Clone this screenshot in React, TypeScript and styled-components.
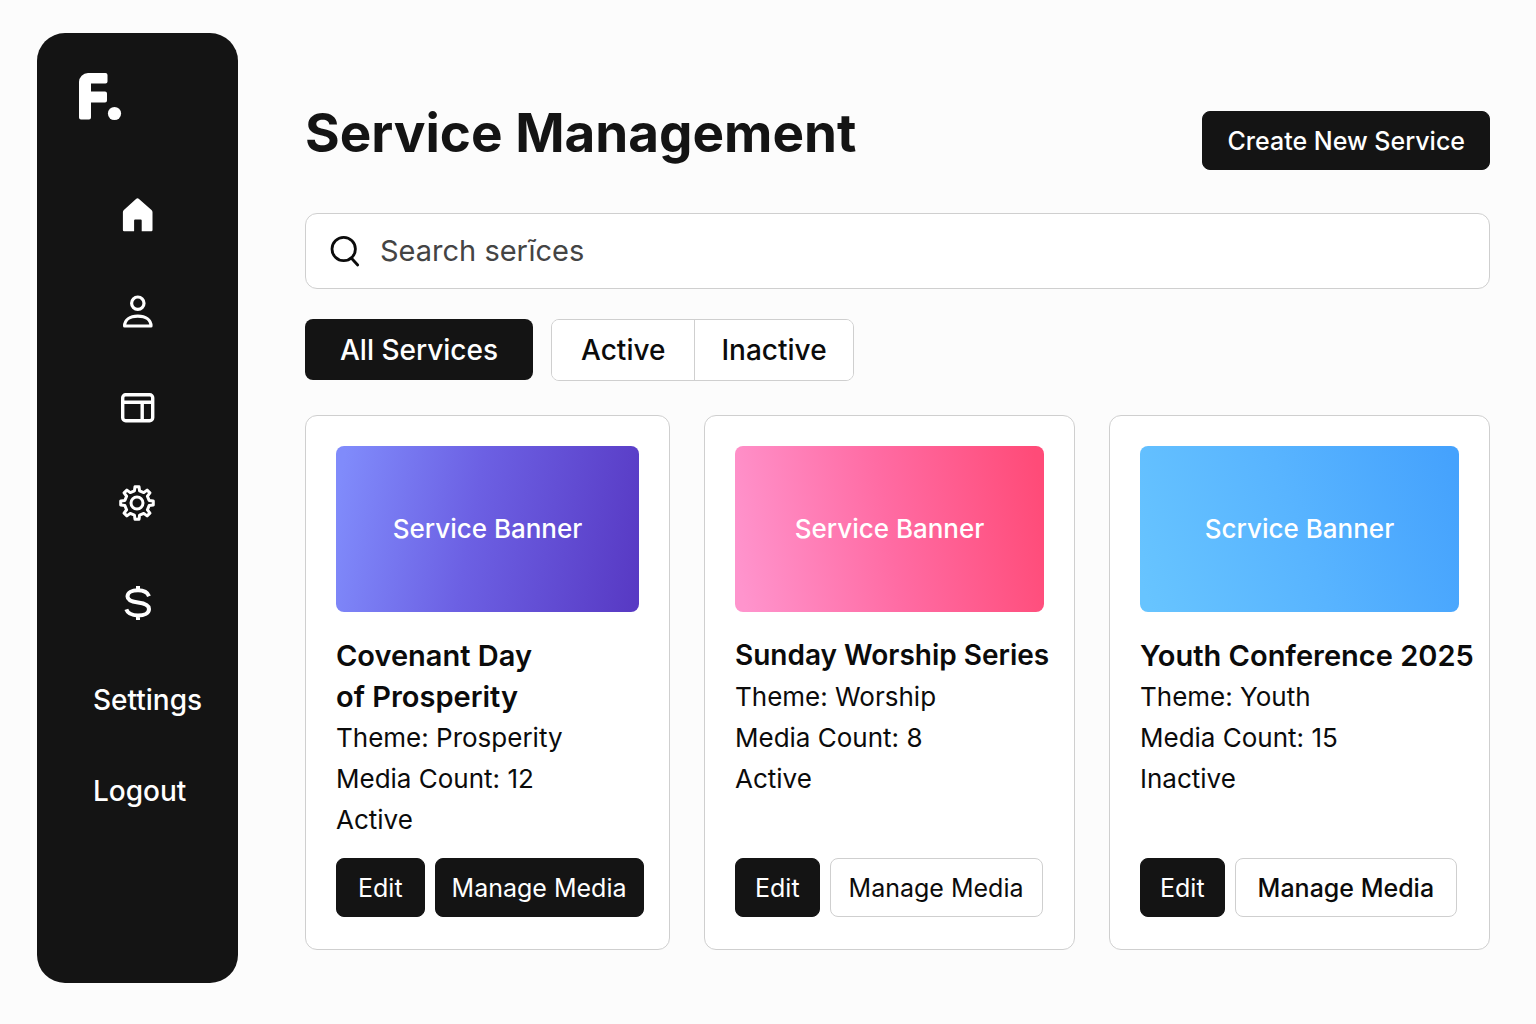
import React from "react";
import styled, { createGlobalStyle } from "styled-components";

const ink = "#141414";
const line = "#cfcfcf";

const GlobalStyle = createGlobalStyle`
  *, *::before, *::after { box-sizing: border-box; }
  body {
    margin: 0;
    background: #fcfcfc;
    color: #0b0b0b;
    font-family: Inter, "Liberation Sans", sans-serif;
  }
  button, input { font: inherit; }
  h1, h2, p { margin: 0; }
`;

const Page = styled.div`
  display: flex;
  gap: 67px;
  min-height: 100vh;
  padding: 33px 46px 41px 37px;
`;

const Sidebar = styled.aside`
  flex: none;
  display: flex;
  flex-direction: column;
  width: 201px;
  padding: 38px 0 40px;
  border-radius: 28px;
  background: ${ink};
  color: #fff;
`;

const Logo = styled.a`
  display: block;
  height: 50px;
  margin: 0 40px 75px;
  color: inherit;
  svg { display: block; }
`;

const IconNav = styled.nav`
  display: flex;
  flex-direction: column;
  align-items: center;
  gap: 61px;
`;

const IconLink = styled.a`
  display: block;
  width: 36px;
  height: 36px;
  color: inherit;
  svg { display: block; overflow: visible; }
`;

const TextNav = styled.nav`
  display: flex;
  flex-direction: column;
  align-items: flex-start;
  gap: 55px;
  margin-top: 62px;
  padding-left: 56px;
`;

const TextLink = styled.a`
  color: inherit;
  font-size: 28px;
  font-weight: 500;
  line-height: 36px;
  text-decoration: none;
`;

const Main = styled.main`
  flex: 1;
  min-width: 0;
  padding-top: 66px;
`;

const Header = styled.header`
  display: flex;
  align-items: flex-start;
  justify-content: space-between;
  margin-bottom: 38px;
`;

const Title = styled.h1`
  height: 76px;
  color: ${ink};
  font-size: 53px;
  font-weight: 700;
  line-height: 68px;
`;

const HeaderActions = styled.div`
  display: flex;
  padding-top: 12px;
`;

const Button = styled.button<{ $outline?: boolean; $pad: number; $medium?: boolean }>`
  height: 59px;
  padding: 0 ${(p) => p.$pad}px;
  border: 1px solid ${(p) => (p.$outline ? line : ink)};
  border-radius: 8px;
  background: ${(p) => (p.$outline ? "#fff" : ink)};
  color: ${(p) => (p.$outline ? "#0b0b0b" : "#fff")};
  font-size: 25px;
  font-weight: ${(p) => (p.$medium ? 500 : 400)};
  line-height: 32px;
  white-space: nowrap;
  cursor: pointer;
`;

const SearchBox = styled.label`
  display: flex;
  align-items: center;
  gap: 18px;
  height: 76px;
  padding: 0 24px;
  border: 1px solid ${line};
  border-radius: 12px;
  background: #fff;
  svg { flex: none; }
`;

const SearchInput = styled.input`
  flex: 1;
  min-width: 0;
  padding: 0;
  border: 0;
  outline: 0;
  background: transparent;
  font-size: 29px;
  line-height: 40px;
  &::placeholder { color: #444; opacity: 1; }
`;

const Filters = styled.div`
  display: flex;
  gap: 18px;
  margin: 30px 0 34px;
`;

const Segment = styled.div`
  display: flex;
  border: 1px solid ${line};
  border-radius: 8px;
  background: #fff;
  overflow: hidden;
`;

const FilterButton = styled.button<{ $selected?: boolean; $pad: number }>`
  height: ${(p) => (p.$selected ? 61 : 60)}px;
  padding: 0 ${(p) => p.$pad}px;
  border: 0;
  border-radius: ${(p) => (p.$selected ? 8 : 0)}px;
  background: ${(p) => (p.$selected ? ink : "#fff")};
  color: ${(p) => (p.$selected ? "#fff" : "#0b0b0b")};
  font-size: 28px;
  font-weight: 500;
  cursor: pointer;
  & + & { border-left: 1px solid ${line}; }
`;

const Cards = styled.section`
  display: grid;
  grid-template-columns: 365fr 371fr 381fr;
  gap: 34px;
`;

const Card = styled.article`
  display: flex;
  flex-direction: column;
  min-width: 0;
  padding: 30px 30px 32px;
  border: 1px solid ${line};
  border-radius: 12px;
  background: #fff;
`;

const Banner = styled.div<{ $fill: string }>`
  display: flex;
  align-items: center;
  justify-content: center;
  height: 166px;
  margin-bottom: 23px;
  padding-bottom: 2px;
  border-radius: 8px;
  background: ${(p) => p.$fill};
  color: #fff;
  font-size: 26px;
  font-weight: 500;
`;

const CardTitle = styled.h2<{ $compact?: boolean }>`
  font-size: ${(p) => (p.$compact ? 28 : 29)}px;
  font-weight: 600;
  line-height: 41px;
  white-space: pre;
`;

const Detail = styled.p`
  font-size: 26px;
  line-height: 41px;
`;

const Actions = styled.div`
  display: flex;
  gap: 10px;
  margin-top: auto;
  padding-top: 18px;
`;

const HomeIcon = () => (
  <svg width="36" height="36" viewBox="0 0 36 36" fill="currentColor" aria-hidden="true">
    <path d="M16 2.900a2.200 2.200 0 0 1 3 0L31.500 14a3 3 0 0 1 1 2.200V34a1.200 1.200 0 0 1-1.200 1.200H21.700V24.500a1 1 0 0 0-1-1h-5.600a1 1 0 0 0-1 1v10.700H4.100A1.200 1.200 0 0 1 2.900 34V16.200A3 3 0 0 1 3.900 14z" />
  </svg>
);

const UserIcon = () => (
  <svg width="36" height="36" viewBox="0 0 36 36" fill="none" stroke="currentColor" strokeWidth="3.200" strokeLinejoin="round" aria-hidden="true">
    <circle cx="17.800" cy="10.200" r="6.200" />
    <path d="M4.600 33c0-6.300 5.400-9.900 13.200-9.900s13.200 3.600 13.200 9.900z" />
  </svg>
);

const LayoutIcon = () => (
  <svg width="36" height="36" viewBox="0 0 36 36" fill="none" stroke="currentColor" strokeWidth="3.400" aria-hidden="true">
    <rect x="2.700" y="4.700" width="30" height="26" rx="3" />
    <path d="M2.700 12.200H32.700M22.200 12.200V30.700" />
  </svg>
);

const gearPath = (() => {
  const teeth = 8;
  const points: string[] = [];
  for (let i = 0; i < teeth; i++) {
    const mid = (i / teeth) * 360 - 90;
    const corners: [number, number][] = [[-12, 12.4], [-7, 16.4], [7, 16.4], [12, 12.4]];
    corners.forEach(([turn, radius]) => {
      const a = ((mid + turn) * Math.PI) / 180;
      points.push(`${(17 + radius * Math.cos(a)).toFixed(2)} ${(16 + radius * Math.sin(a)).toFixed(2)}`);
    });
  }
  return `M${points.join("L")}Z`;
})();

const GearIcon = () => (
  <svg width="36" height="36" viewBox="0 0 36 36" fill="none" stroke="currentColor" strokeWidth="3" strokeLinejoin="round" aria-hidden="true">
    <path d={gearPath} />
    <circle cx="17" cy="16" r="6" />
  </svg>
);

const DollarIcon = () => (
  <svg width="36" height="36" viewBox="0 0 36 36" fill="none" stroke="currentColor" strokeWidth="4" aria-hidden="true">
    <path d="M29 12.200C27.500 8.300 23.500 6.300 18 6.300c-6.300 0-10.500 2.300-10.500 6.200 0 4 4.400 5.200 10.500 6 6.500.8 11 2.200 11 6.400 0 4-4.500 6.500-11 6.500-6 0-10.300-2.200-11.700-6M18 2v5M18 31v5" />
  </svg>
);

const navItems = [
  { label: "Home", icon: <HomeIcon /> },
  { label: "People", icon: <UserIcon /> },
  { label: "Pages", icon: <LayoutIcon /> },
  { label: "Configuration", icon: <GearIcon /> },
  { label: "Giving", icon: <DollarIcon /> },
];

const services = [
  {
    title: "Covenant Day\nof Prosperity",
    compact: false,
    banner: "Service Banner",
    fill: "linear-gradient(100deg, #808bfb 3%, #6c60e3 45%, #583ac4 98%)",
    theme: "Prosperity",
    count: 12,
    status: "Active",
    editPad: 21,
    managePad: 16,
    outline: false,
    medium: false,
  },
  {
    title: "Sunday Worship Series",
    compact: true,
    banner: "Service Banner",
    fill: "linear-gradient(80deg, #ff94cd 3%, #ff6ba3 50%, #ff4b78 97%)",
    theme: "Worship",
    count: 8,
    status: "Active",
    editPad: 19,
    managePad: 18,
    outline: true,
    medium: false,
  },
  {
    title: "Youth Conference 2025",
    compact: false,
    banner: "Scrvice Banner",
    fill: "linear-gradient(70deg, #67c4ff 3%, #58b4ff 50%, #45a2fd 97%)",
    theme: "Youth",
    count: 15,
    status: "Inactive",
    editPad: 19,
    managePad: 22,
    outline: true,
    medium: true,
  },
];

export default function App() {
  return (
    <>
      <GlobalStyle />
      <Page>
        <Sidebar>
          <Logo href="#" aria-label="F.">
            <svg width="46" height="50" viewBox="0 0 46 50" fill="currentColor" aria-hidden="true">
              <path d="M11 2H28.500a2 2 0 0 1 2 2V10.500a2 2 0 0 1-2 2H14V20.500H28a2 2 0 0 1 2 2V29.500a2 2 0 0 1-2 2H14V46.500a2 2 0 0 1-2 2H4a2 2 0 0 1-2-2V11a9 9 0 0 1 9-9z" />
              <circle cx="37.500" cy="42.500" r="6.600" />
            </svg>
          </Logo>
          <IconNav aria-label="Sections">
            {navItems.map((item) => (
              <IconLink key={item.label} href="#" aria-label={item.label}>
                {item.icon}
              </IconLink>
            ))}
          </IconNav>
          <TextNav aria-label="Account">
            <TextLink href="#">Settings</TextLink>
            <TextLink href="#">Logout</TextLink>
          </TextNav>
        </Sidebar>
        <Main>
          <Header>
            <Title>Service Management</Title>
            <HeaderActions>
              <Button $pad={24} $medium>Create New Service</Button>
            </HeaderActions>
          </Header>
          <SearchBox>
            <svg width="32" height="34" viewBox="0 0 32 34" fill="none" stroke="#0b0b0b" strokeWidth="2.800" strokeLinecap="round" aria-hidden="true">
              <circle cx="13.700" cy="15" r="11.700" />
              <path d="M21.700 24.500L27.700 31" />
            </svg>
            <SearchInput type="search" aria-label="Search services" placeholder="Search serĩces" />
          </SearchBox>
          <Filters>
            <FilterButton $selected $pad={35}>All Services</FilterButton>
            <Segment>
              <FilterButton $pad={29}>Active</FilterButton>
              <FilterButton $pad={26}>Inactive</FilterButton>
            </Segment>
          </Filters>
          <Cards>
            {services.map((s) => (
              <Card key={s.title}>
                <Banner $fill={s.fill}>{s.banner}</Banner>
                <CardTitle $compact={s.compact}>{s.title}</CardTitle>
                <Detail>Theme: {s.theme}</Detail>
                <Detail>Media Count: {s.count}</Detail>
                <Detail>{s.status}</Detail>
                <Actions>
                  <Button $pad={s.editPad}>Edit</Button>
                  <Button $pad={s.managePad} $outline={s.outline} $medium={s.medium}>Manage Media</Button>
                </Actions>
              </Card>
            ))}
          </Cards>
        </Main>
      </Page>
    </>
  );
}
